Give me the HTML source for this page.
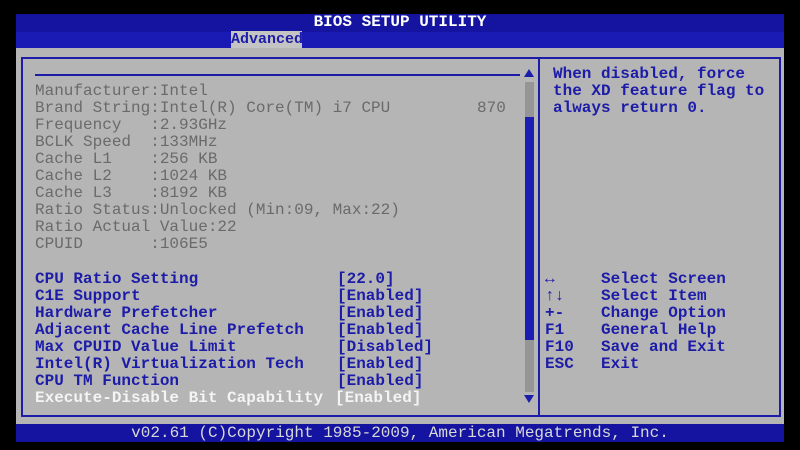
<!DOCTYPE html>
<html><head><style>
body{margin:0;width:800px;height:450px;background:#000;position:relative;overflow:hidden;font-family:"Liberation Mono",monospace;}
div{position:absolute;}
.t{font-size:16px;line-height:17px;white-space:pre;}
.g{color:#6a6a6a;}
.b{color:#1c1ca8;font-weight:bold;}
.w{color:#f4f4f4;font-weight:bold;}
</style></head><body>
<div style="left:16px;top:14px;width:768px;height:18px;background:#1414a0;"></div>
<div class="t" style="left:16px;top:14px;width:768px;text-align:center;color:#fff;font-weight:bold;font-size:16px;">BIOS SETUP UTILITY</div>
<div style="left:16px;top:32px;width:768px;height:16px;background:#1a1ab4;"></div>
<div class="t" style="left:231px;top:31px;width:71px;height:17px;background:#c4c4c4;color:#1c1ca8;font-weight:bold;font-size:15px;text-align:center;">Advanced</div>
<div style="left:16px;top:48px;width:768px;height:376px;background:#b5b5b5;"></div>
<div style="left:21px;top:57px;width:756px;height:356px;border:2px solid #1c1ca8;"></div>
<div style="left:538px;top:57px;width:2px;height:358px;background:#1c1ca8;"></div>
<div style="left:35px;top:74px;width:485px;height:2px;background:#1c1ca8;"></div>
<div style="left:524px;top:69px;width:0;height:0;border-left:5px solid transparent;border-right:5px solid transparent;border-bottom:8px solid #1c1ca8;"></div>
<div style="left:525px;top:82px;width:9px;height:310px;background:#959595;"></div>
<div style="left:525px;top:117px;width:9px;height:223px;background:#1c1cb0;"></div>
<div style="left:524px;top:395px;width:0;height:0;border-left:5px solid transparent;border-right:5px solid transparent;border-top:8px solid #1c1ca8;"></div>
<div class="t g" style="left:35px;top:83px;">Manufacturer:Intel
Brand String:Intel(R) Core(TM) i7 CPU
Frequency   :2.93GHz
BCLK Speed  :133MHz
Cache L1    :256 KB
Cache L2    :1024 KB
Cache L3    :8192 KB
Ratio Status:Unlocked (Min:09, Max:22)
Ratio Actual Value:22
CPUID       :106E5</div>
<div class="t g" style="left:477px;top:100px;">870</div>
<div class="t b" style="left:35px;top:271px;">CPU Ratio Setting
C1E Support
Hardware Prefetcher
Adjacent Cache Line Prefetch
Max CPUID Value Limit
Intel(R) Virtualization Tech
CPU TM Function</div>
<div class="t b" style="left:337px;top:271px;">[22.0]
[Enabled]
[Enabled]
[Enabled]
[Disabled]
[Enabled]
[Enabled]</div>
<div class="t w" style="left:35px;top:390px;">Execute-Disable Bit Capability</div>
<div class="t w" style="left:335px;top:390px;">[Enabled]</div>
<div class="t b" style="left:553px;top:66px;">When disabled, force
the XD feature flag to
always return 0.</div>
<div class="t b" style="left:545px;top:271px;">&#8596;
&#8593;&#8595;
+-
F1
F10
ESC</div>
<div class="t b" style="left:601px;top:271px;">Select Screen
Select Item
Change Option
General Help
Save and Exit
Exit</div>
<div style="left:16px;top:424px;width:768px;height:18px;background:#1414a0;"></div>
<div class="t" style="left:16px;top:425px;width:768px;text-align:center;color:#d8d8d8;font-size:16px;">v02.61 (C)Copyright 1985-2009, American Megatrends, Inc.</div>
</body></html>
